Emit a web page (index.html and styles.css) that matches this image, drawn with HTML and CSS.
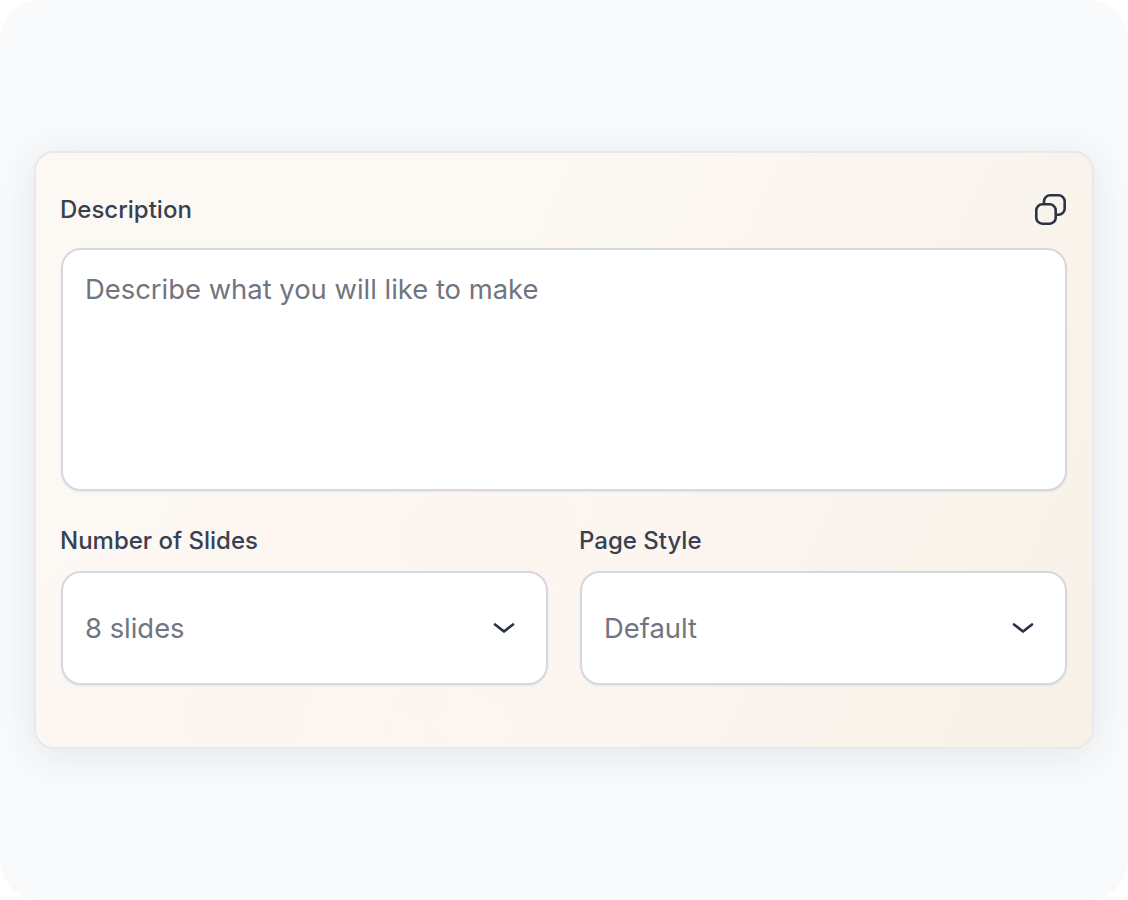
FILE: index.html
```html
<!DOCTYPE html>
<html lang="en">
<head>
<meta charset="utf-8">
<title>Description form</title>
<link rel="stylesheet" href="styles.css">
</head>
<body>
<main class="frame">
  <form class="card">
    <div class="head">
      <label class="label">Description</label>
      <svg class="copy" width="32" height="32" viewBox="0 0 32 32" fill="none" stroke="#2b3344" stroke-width="2.6" stroke-linejoin="round" aria-hidden="true">
        <rect x="1.3" y="10.3" width="19.4" height="19.4" rx="6"/>
        <path d="M9 10.3V7.5A6.2 6.2 0 0 1 15.2 1.3H23.5A6.2 6.2 0 0 1 29.7 7.5V14.5A6.2 6.2 0 0 1 23.5 20.7H20.7"/>
      </svg>
    </div>
    <div class="box textarea">Describe what you will like to make</div>
    <div class="row">
      <div class="field">
        <label class="label">Number of Slides</label>
        <div class="box select"><span>8 slides</span>
          <svg class="chev" width="22" height="12" viewBox="0 0 22 12" fill="none" stroke="#2b3344" stroke-width="2.7" stroke-linecap="round" stroke-linejoin="round" aria-hidden="true"><path d="M2 2.5L11 9.5L20 2.5"/></svg>
        </div>
      </div>
      <div class="field">
        <label class="label">Page Style</label>
        <div class="box select"><span>Default</span>
          <svg class="chev" width="22" height="12" viewBox="0 0 22 12" fill="none" stroke="#2b3344" stroke-width="2.7" stroke-linecap="round" stroke-linejoin="round" aria-hidden="true"><path d="M2 2.5L11 9.5L20 2.5"/></svg>
        </div>
      </div>
    </div>
  </form>
</main>
</body>
</html>
```
FILE: styles.css
```css
* { box-sizing: border-box; }
html, body { margin: 0; background: #fff; }
body { font-family: Inter, "Noto Sans", sans-serif; }
.frame {
  width: 1128px; height: 900px;
  background: #f9fafb;
  border-radius: 40px;
  padding: 151px 34px;
}
.card {
  height: 598px;
  border: 2px solid #e8e9eb;
  border-radius: 20px;
  padding: 24px 25px 25px;
  background:
    radial-gradient(260px 200px at 200px 560px, rgba(253, 243, 238, 0.8), rgba(253, 243, 238, 0)),
    radial-gradient(300px 200px at 420px 380px, rgba(253, 243, 238, 0.7), rgba(253, 243, 238, 0)),
    linear-gradient(115deg, #fcf9f5 0%, #fcf8f3 40%, #fbf5f0 65%, #f7f1e8 100%);
  box-shadow: 0 6px 40px rgba(40, 50, 70, 0.1);
}
.head { display: flex; justify-content: space-between; align-items: center; height: 71px; padding-bottom: 5px; }
.label { font-size: 24px; font-weight: 450; color: #374151; line-height: 32px; margin-left: -1px; }
.box {
  background: #fff;
  border: 2px solid #d5d8de;
  border-radius: 20px;
  color: #71757f;
  font-size: 27.4px;
  line-height: 36px;
  padding: 0 22px;
  box-shadow: 0 1px 2px rgba(40, 50, 70, 0.08);
}
.textarea { height: 243px; padding-top: 21px; }
.row { display: grid; grid-template-columns: 1fr 1fr; gap: 32px; margin-top: 34px; }
.field { display: flex; flex-direction: column; gap: 14px; }
.select { height: 114px; display: flex; justify-content: space-between; align-items: center; }
.chev { margin-right: 9px; }
```
